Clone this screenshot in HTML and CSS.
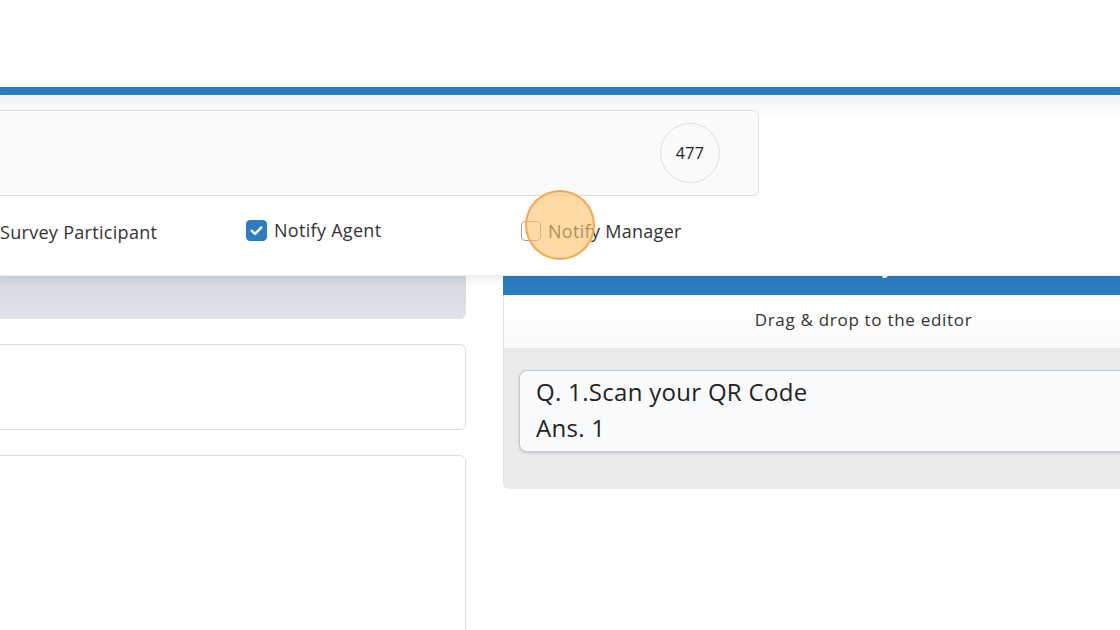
FILE: index.html
```html
<!DOCTYPE html>
<html lang="en">
<head>
  <meta charset="UTF-8" />
  <meta name="viewport" content="width=device-width, initial-scale=1.0"/>
  <title>Survey Editor</title>
  <link rel="stylesheet" href="styles.css">
</head>
<body>

  <div class="topbar"></div>

  <div class="page">
    <!-- Left column -->
    <div class="left-col">
      <div class="toolbar"></div>
      <div class="box box-small"></div>
      <div class="box box-large"></div>
    </div>

    <!-- Right panel -->
    <div class="panel">
      <div class="panel-head">Survey</div>
      <div class="panel-hint">Drag &amp; drop to the editor</div>
      <div class="panel-body">
        <div class="question-card">
          <div class="q-title">Q. 1.Scan your QR Code</div>
          <div class="q-answer">Ans. 1</div>
        </div>
      </div>
    </div>
  </div>

  <!-- Notification popup -->
  <div class="popup">
    <div class="message-box">
      <span class="counter">477</span>
    </div>
    <div class="notify-row">
      <label class="notify notify-first">Survey Participant</label>
      <label class="notify notify-second">
        <span class="check checked">
          <svg viewBox="0 0 20 20" width="17" height="17"><path d="M4.5 10.5 L8.3 14 L15.5 6.5" fill="none" stroke="#fff" stroke-width="3" stroke-linecap="round" stroke-linejoin="round"/></svg>
        </span>
        Notify Agent
      </label>
      <label class="notify">
        <span class="check"></span>
        Notify Manager
      </label>
    </div>
  </div>

  <div class="click-mark"></div>

</body>
</html>
```

FILE: styles.css
```css
:root {
  --blue: #2c7cc0;
  --border: #dedede;
  --text: #2b2b2b;
}

body {
  font-family: "Open Sans", Arial, sans-serif;
  color: var(--text);
  background: #fff;
  margin: 0;
  padding: 0;
  overflow: hidden;
  height: 630px;
  position: relative;
}

.topbar {
  margin-top: 87px;
  height: 8px;
  background: var(--blue);
}

.page {
  display: flex;
  gap: 37px;
  margin-left: -20px;
  padding-top: 150px;
}

/* Left column */
.left-col {
  width: 486px;
  flex-shrink: 0;
  display: flex;
  flex-direction: column;
}

.toolbar {
  height: 74px;
  border-radius: 0 0 6px 0;
  background: linear-gradient(#cdd3da, #dfe3ea);
}

.box {
  border: 1px solid var(--border);
  border-radius: 6px;
  background: #fff;
}

.box-small {
  margin-top: 25px;
  height: 84px;
}

.box-large {
  margin-top: 25px;
  height: 260px;
}

/* Right panel */
.panel {
  width: 720px;
  flex-shrink: 0;
  align-self: flex-start;
}

.panel-head {
  height: 50px;
  background: var(--blue);
  color: #fff;
  font-size: 22px;
  font-weight: 600;
  line-height: 38px;
  text-align: center;
  text-indent: -10px;
}

.panel-hint {
  height: 53px;
  line-height: 50px;
  text-align: center;
  font-size: 17px;
  letter-spacing: 0.7px;
  color: #333;
  background: linear-gradient(#fff, #fafafa);
  border-left: 1px solid #e3e3e3;
}

.panel-body {
  background: #ebebeb;
  padding: 22px 15px 37px;
  border-radius: 0 0 0 6px;
  border-left: 1px solid #e3e3e3;
}

.question-card {
  background: #f9fafb;
  border: 1px solid #c3c9d2;
  border-radius: 8px;
  box-shadow: 0 1px 3px rgba(0,0,0,0.18);
  padding: 3px 16px 5px;
}

.q-title,
.q-answer {
  font-size: 24px;
  letter-spacing: 0.3px;
  line-height: 36px;
  color: #222;
}

/* Popup */
.popup {
  position: absolute;
  top: 95px;
  left: 0;
  right: 0;
  height: 180px;
  background: linear-gradient(#f1f1f1, #fff 22px);
  box-shadow: 0 4px 8px rgba(0,0,0,0.07);
  border-bottom: 1px solid #eee;
}

.message-box {
  margin: 15px 0 0 -20px;
  width: 779px;
  height: 86px;
  border: 1px solid var(--border);
  border-radius: 6px;
  background: #fafafa;
  display: flex;
  align-items: center;
  justify-content: flex-end;
  padding-right: 38px;
  box-sizing: border-box;
}

.counter {
  width: 58px;
  height: 58px;
  border-radius: 50%;
  border: 1px solid #e0e0e0;
  background: #fafafa;
  display: flex;
  align-items: center;
  justify-content: center;
  font-size: 16px;
  letter-spacing: 0.3px;
  color: #222;
}

.notify-row {
  display: flex;
  align-items: center;
  margin-top: 22px;
}

.notify {
  display: flex;
  align-items: center;
  gap: 7px;
  font-size: 18px;
  letter-spacing: 0.3px;
  color: #333;
  white-space: nowrap;
}

.notify-first {
  width: 246px;
  padding-top: 2px;
}

.notify-second {
  width: 275px;
  margin-top: -2px;
}

.check {
  width: 20px;
  height: 20px;
  border: 1.5px solid #9aa0aa;
  border-radius: 4px;
  box-sizing: border-box;
  display: flex;
  align-items: center;
  justify-content: center;
}

.check.checked {
  width: 21px;
  height: 21px;
  background: var(--blue);
  border-color: var(--blue);
}

/* Click highlight */
.click-mark {
  position: absolute;
  left: 525px;
  top: 190px;
  width: 70px;
  height: 70px;
  border-radius: 50%;
  background: rgba(255, 196, 110, 0.62);
  border: 2px solid rgba(242, 160, 70, 0.85);
  box-sizing: border-box;
}
```
